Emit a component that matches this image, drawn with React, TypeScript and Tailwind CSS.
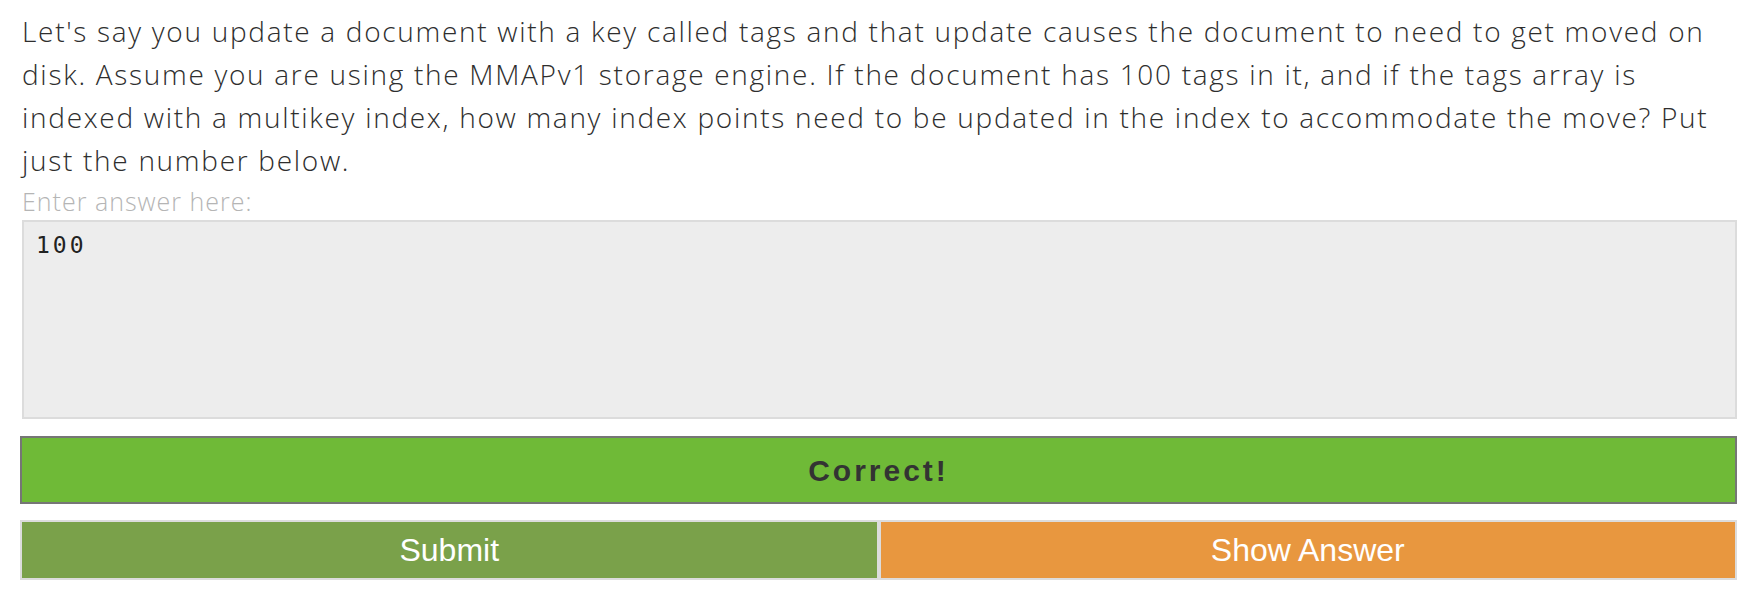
const lines = [
  "Let's say you update a document with a key called tags and that update causes the document to need to get moved on",
  "disk. Assume you are using the MMAPv1 storage engine. If the document has 100 tags in it, and if the tags array is",
  "indexed with a multikey index, how many index points need to be updated in the index to accommodate the move? Put",
  "just the number below.",
];

export default function App() {
  return (
    <div className="min-h-screen bg-white pl-[20px] pr-[26px] pt-[10px] font-['Liberation_Sans',Arial,sans-serif]">
      <p className="pl-[2px] font-['Open_Sans',sans-serif] text-[28px] font-light leading-[43px] tracking-[1.7px] text-[#2e2e2e]">
        {lines.map((l, i) => (
          <span key={i} className="block whitespace-nowrap">
            {l}
          </span>
        ))}
      </p>
      <label className="block pl-[2px] font-['Open_Sans',sans-serif] text-[25px] font-light leading-[38px] tracking-[1px] text-[#b5b5b5]">
        Enter answer here:
      </label>
      <textarea
        readOnly
        defaultValue="100"
        className="ml-[2px] block h-[199px] w-[calc(100%-2px)] resize-none border-2 border-[#dcdcdc] bg-[#ededed] px-[12px] py-[6px] font-['DejaVu_Sans_Mono',monospace] text-[23px] tracking-[3px] text-[#222] outline-none"
      />
      <div className="mt-[17px] flex h-[68px] items-center justify-center border-2 border-[#767676] bg-[#6fba37]">
        <span className="text-[30px] font-bold tracking-[3px] text-[#333]">Correct!</span>
      </div>
      <div className="mt-[16px] flex h-[60px]">
        <button className="flex-1 border-2 border-[#dcdcdc] bg-[#7aa14a] text-[32px] text-white">Submit</button>
        <button className="flex-1 border-2 border-[#dcdcdc] bg-[#e8973f] text-[32px] text-white">Show Answer</button>
      </div>
    </div>
  );
}
